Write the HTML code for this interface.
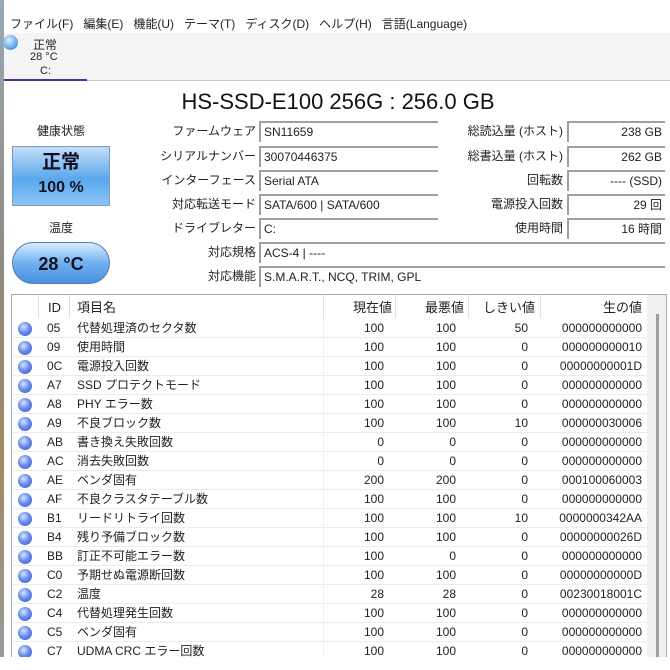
<!DOCTYPE html>
<html><head><meta charset="utf-8"><style>
*{margin:0;padding:0;box-sizing:border-box}
body{width:670px;height:670px;background:#fff;font-family:"Segoe UI","Liberation Sans","Noto Sans CJK JP",sans-serif;font-size:12px;color:#222;position:relative;overflow:hidden}
.a{position:absolute;white-space:nowrap}
.lbl{position:absolute;text-align:right;width:160px;line-height:20px}
.box{position:absolute;height:21px;border-top:2px solid #a0a0a0;border-left:2px solid #a0a0a0;line-height:19px;padding:0 3px;background:#fff}
.row{position:absolute;left:13px;width:634px;height:19px;border-bottom:1px solid #ececec;line-height:19px}
.row span{position:absolute}
.dot{position:absolute;left:5px;top:3px;width:14px;height:14px;border-radius:50%;background:radial-gradient(circle at 40% 35%,#d8e6ff 0,#6a8ef0 45%,#3552c8 100%)}
</style></head><body>
<div class="a" style="left:0;top:0;width:4px;height:657px;background:linear-gradient(#9aa8b4,#8e8a80 40%,#a08a60 70%,#9a9a9a)"></div>
<div class="a" style="left:4px;top:0;width:666px;height:36px;background:#fff"></div>
<div class="a" style="left:10px;top:15px;font-size:12px">ファイル(F)&nbsp;&nbsp;&nbsp;編集(E)&nbsp;&nbsp;&nbsp;機能(U)&nbsp;&nbsp;&nbsp;テーマ(T)&nbsp;&nbsp;&nbsp;ディスク(D)&nbsp;&nbsp;&nbsp;ヘルプ(H)&nbsp;&nbsp;&nbsp;言語(Language)</div>
<div class="a" style="left:4px;top:33px;width:666px;height:48px;background:#f4f4f4;border-bottom:1px solid #c8c8c8"></div>
<div class="a" style="left:3px;top:35px;width:15px;height:15px;border-radius:50%;background:radial-gradient(circle at 40% 35%,#e0f0ff,#5ea8e8 60%,#3d7fc8)"></div>
<div class="a" style="left:33px;top:36px;font-size:12px">正常</div>
<div class="a" style="left:30px;top:51px;font-size:11px">28 °C</div>
<div class="a" style="left:40px;top:65px;font-size:11px">C:</div>
<div class="a" style="left:4px;top:79px;width:83px;height:2px;background:#5030a0"></div>
<div class="a" style="left:0;top:89px;width:676px;text-align:center;font-size:22px;color:#111">HS-SSD-E100 256G : 256.0 GB</div>
<div class="a" style="left:12px;top:122px;width:98px;text-align:center">健康状態</div>
<div class="a" style="left:12px;top:146px;width:98px;height:60px;border:1px solid #7a9cc0;background:linear-gradient(#c4def8,#5aa8ec 55%,#8cc4f4);text-align:center;font-weight:bold;color:#112">
<div style="font-size:19px;line-height:28px;margin-top:2px">正常</div><div style="font-size:16px;line-height:22px">100 %</div></div>
<div class="a" style="left:12px;top:219px;width:98px;text-align:center">温度</div>
<div class="a" style="left:12px;top:242px;width:98px;height:42px;border-radius:21px;border:1px solid #5a7ab0;background:linear-gradient(#d8ecff,#70b0f0 50%,#4a90e0);text-align:center;font-weight:bold;font-size:18px;line-height:42px;color:#112">28 °C</div>

<div class="lbl" style="left:96px;top:121px">ファームウェア</div><div class="box" style="left:259px;top:121px;width:179px">SN11659</div>
<div class="lbl" style="left:96px;top:146px">シリアルナンバー</div><div class="box" style="left:259px;top:146px;width:179px">30070446375</div>
<div class="lbl" style="left:96px;top:170px">インターフェース</div><div class="box" style="left:259px;top:170px;width:179px">Serial ATA</div>
<div class="lbl" style="left:96px;top:194px">対応転送モード</div><div class="box" style="left:259px;top:194px;width:179px">SATA/600 | SATA/600</div>
<div class="lbl" style="left:96px;top:218px">ドライブレター</div><div class="box" style="left:259px;top:218px;width:179px">C:</div>
<div class="lbl" style="left:96px;top:242px">対応規格</div><div class="box" style="left:259px;top:242px;width:406px">ACS-4 | ----</div>
<div class="lbl" style="left:96px;top:266px">対応機能</div><div class="box" style="left:259px;top:266px;width:406px">S.M.A.R.T., NCQ, TRIM, GPL</div>

<div class="lbl" style="left:403px;top:121px">総読込量 (ホスト)</div><div class="box" style="left:567px;top:121px;width:98px;text-align:right">238 GB</div>
<div class="lbl" style="left:403px;top:146px">総書込量 (ホスト)</div><div class="box" style="left:567px;top:146px;width:98px;text-align:right">262 GB</div>
<div class="lbl" style="left:403px;top:170px">回転数</div><div class="box" style="left:567px;top:170px;width:98px;text-align:right">---- (SSD)</div>
<div class="lbl" style="left:403px;top:194px">電源投入回数</div><div class="box" style="left:567px;top:194px;width:98px;text-align:right">29 回</div>
<div class="lbl" style="left:403px;top:218px">使用時間</div><div class="box" style="left:567px;top:218px;width:98px;text-align:right">16 時間</div>

<div class="a" style="left:11px;top:294px;width:656px;height:376px;border:1px solid #a8a8a8;border-bottom:none"></div>
<div class="a" style="left:647px;top:295px;width:19px;height:375px;background:#f0f0f0"></div>
<div class="a" style="left:656px;top:314px;width:3px;height:356px;background:#a0a0a0"></div>
<div class="a" style="left:38px;top:295px;width:1px;height:23px;background:#e0e0e0"></div>
<div class="a" style="left:69px;top:295px;width:1px;height:23px;background:#e0e0e0"></div>
<div class="a" style="left:323px;top:295px;width:1px;height:23px;background:#e0e0e0"></div>
<div class="a" style="left:395px;top:295px;width:1px;height:23px;background:#e0e0e0"></div>
<div class="a" style="left:468px;top:295px;width:1px;height:23px;background:#e0e0e0"></div>
<div class="a" style="left:540px;top:295px;width:1px;height:23px;background:#e0e0e0"></div>
<div class="row" style="top:298px;border:none;font-size:13px"><span style="left:35px">ID</span><span style="left:64px">項目名</span><span style="right:255px">現在値</span><span style="right:183px">最悪値</span><span style="right:112px">しきい値</span><span style="right:5px">生の値</span></div>
<div id="rows"></div>
<script>
var d=[["05","代替処理済のセクタ数",100,100,50,"000000000000"],["09","使用時間",100,100,0,"000000000010"],["0C","電源投入回数",100,100,0,"00000000001D"],["A7","SSD プロテクトモード",100,100,0,"000000000000"],["A8","PHY エラー数",100,100,0,"000000000000"],["A9","不良ブロック数",100,100,10,"000000030006"],["AB","書き換え失敗回数",0,0,0,"000000000000"],["AC","消去失敗回数",0,0,0,"000000000000"],["AE","ベンダ固有",200,200,0,"000100060003"],["AF","不良クラスタテーブル数",100,100,0,"000000000000"],["B1","リードリトライ回数",100,100,10,"0000000342AA"],["B4","残り予備ブロック数",100,100,0,"00000000026D"],["BB","訂正不可能エラー数",100,0,0,"000000000000"],["C0","予期せぬ電源断回数",100,100,0,"00000000000D"],["C2","温度",28,28,0,"00230018001C"],["C4","代替処理発生回数",100,100,0,"000000000000"],["C5","ベンダ固有",100,100,0,"000000000000"],["C7","UDMA CRC エラー回数",100,100,0,"000000000000"]];
var h="";d.forEach(function(r,i){h+='<div class="row" style="top:'+(319+i*19)+'px"><div class="dot"></div><span style="left:34px">'+r[0]+'</span><span style="left:64px">'+r[1]+'</span><span style="right:263px">'+r[2]+'</span><span style="right:191px">'+r[3]+'</span><span style="right:119px">'+r[4]+'</span><span style="right:5px">'+r[5]+'</span></div>'});
document.getElementById("rows").innerHTML=h;
</script>
<div class="a" style="left:323px;top:318px;width:217px;height:352px;border-left:1px solid #f0f0f0"></div>
<div class="a" style="left:0;top:657px;width:670px;height:13px;background:#fff"></div>
</body></html>
